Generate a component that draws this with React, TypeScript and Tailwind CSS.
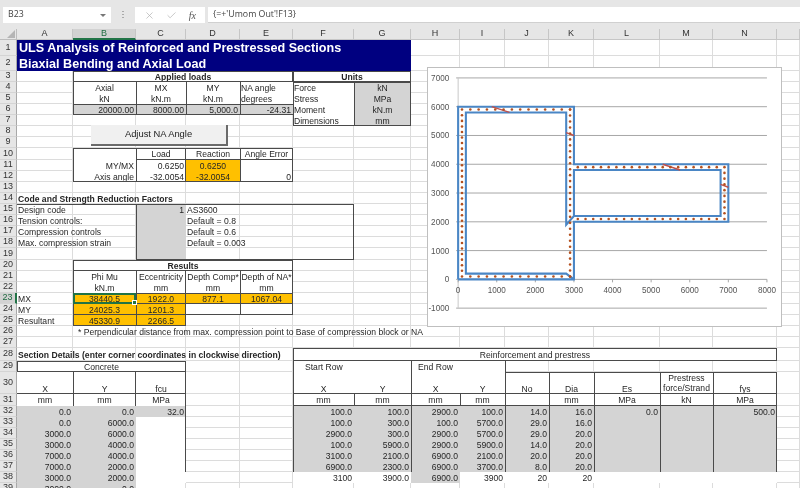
import { Check, X } from 'lucide-react'
import { twMerge } from 'tailwind-merge'

const COLS = ['A', 'B', 'C', 'D', 'E', 'F', 'G', 'H', 'I', 'J', 'K', 'L', 'M', 'N', 'O']
const ROW_COUNT = 39

type Item = { at: string; to?: string; text?: string; cls?: string }

const LEFT = 'justify-start pl-[1px]'
const RIGHT = 'justify-end pr-[2px]'
const MID = 'justify-center'
const BOLD = 'font-bold'
const GREY = 'bg-[#d4d4d4]'
const ORANGE = 'bg-[#ffc000]'

const area = (at: string, to = at) => {
  const col = (s: string) => s.charCodeAt(0) - 63
  const row = (s: string) => Number(s.slice(1)) + 1
  return {
    gridColumn: `${col(at)} / ${col(to) + 1}`,
    gridRow: `${row(at)} / ${row(to) + 1}`,
  }
}

// fills sit over the gridlines, under the text
const fills: Item[] = [
  { at: 'A1', to: 'G2', cls: 'bg-[#000080]' },
  { at: 'B3', to: 'E5', cls: 'bg-white' },
  { at: 'F3', to: 'F7', cls: 'bg-white' },
  { at: 'G3', cls: 'bg-white' },
  { at: 'B6', to: 'E6', cls: GREY },
  { at: 'G4', to: 'G7', cls: GREY },
  { at: 'B10', to: 'E12', cls: 'bg-white' },
  { at: 'D11', to: 'D12', cls: ORANGE },
  { at: 'C15', to: 'C19', cls: GREY },
  { at: 'B20', to: 'E22', cls: 'bg-white' },
  { at: 'B23', to: 'E23', cls: ORANGE },
  { at: 'B24', to: 'C25', cls: ORANGE },
  { at: 'D24', to: 'E24', cls: 'bg-white' },
  { at: 'F28', to: 'N28', cls: 'bg-white' },
  { at: 'A29', to: 'C31', cls: 'bg-white' },
  { at: 'F29', to: 'I31', cls: 'bg-white' },
  { at: 'J30', to: 'N31', cls: 'bg-white' },
  { at: 'A32', to: 'C32', cls: GREY },
  { at: 'A33', to: 'B39', cls: GREY },
  { at: 'C33', to: 'C38', cls: 'bg-white' },
  { at: 'F32', to: 'N37', cls: GREY },
  { at: 'F38', to: 'G38', cls: 'bg-white' },
  { at: 'H38', cls: GREY },
  { at: 'I38', to: 'N38', cls: 'bg-white' },
]

const column = (col: string, from: number, values: string[], cls = RIGHT): Item[] =>
  values.map((text, i) => ({ at: `${col}${from + i}`, text, cls }))

const texts: Item[] = [
  { at: 'A1', to: 'G1', text: 'ULS Analysis of Reinforced and Prestressed Sections', cls: 'justify-start pl-[2px] pt-[1px] text-[12.6px] font-bold text-white' },
  { at: 'A2', to: 'G2', text: 'Biaxial Bending and Axial Load', cls: 'justify-start pl-[2px] pt-[1px] text-[12.6px] font-bold text-white' },
  { at: 'B3', to: 'E3', text: 'Applied loads', cls: `${MID} ${BOLD}` },
  { at: 'F3', to: 'G3', text: 'Units', cls: `${MID} ${BOLD}` },
  { at: 'B4', text: 'Axial', cls: MID },
  { at: 'C4', text: 'MX', cls: MID },
  { at: 'D4', text: 'MY', cls: MID },
  { at: 'E4', text: 'NA angle', cls: LEFT },
  { at: 'B5', text: 'kN', cls: MID },
  { at: 'C5', text: 'kN.m', cls: MID },
  { at: 'D5', text: 'kN.m', cls: MID },
  { at: 'E5', text: 'degrees', cls: LEFT },
  { at: 'B6', text: '20000.00', cls: RIGHT },
  { at: 'C6', text: '8000.00', cls: RIGHT },
  { at: 'D6', text: '5,000.0', cls: RIGHT },
  { at: 'E6', text: '-24.31', cls: RIGHT },
  ...column('F', 4, ['Force', 'Stress', 'Moment', 'Dimensions'], LEFT),
  ...column('G', 4, ['kN', 'MPa', 'kN.m', 'mm'], MID),
  { at: 'C10', text: 'Load', cls: MID },
  { at: 'D10', text: 'Reaction', cls: MID },
  { at: 'E10', text: 'Angle Error', cls: MID },
  { at: 'B11', text: 'MY/MX', cls: RIGHT },
  { at: 'B12', text: 'Axis angle', cls: RIGHT },
  { at: 'C11', text: '0.6250', cls: RIGHT },
  { at: 'C12', text: '-32.0054', cls: RIGHT },
  { at: 'D11', text: '0.6250', cls: MID },
  { at: 'D12', text: '-32.0054', cls: MID },
  { at: 'E12', text: '0', cls: RIGHT },
  { at: 'A14', text: 'Code and Strength Reduction Factors', cls: `${LEFT} ${BOLD}` },
  ...column('A', 15, ['Design code', 'Tension controls:', 'Compression controls', 'Max. compression strain'], LEFT),
  { at: 'C15', text: '1', cls: RIGHT },
  ...column('D', 15, ['AS3600', 'Default = 0.8', 'Default = 0.6', 'Default = 0.003'], LEFT),
  { at: 'B20', to: 'E20', text: 'Results', cls: `${MID} ${BOLD}` },
  { at: 'B21', text: 'Phi Mu', cls: MID },
  { at: 'C21', text: 'Eccentricity', cls: MID },
  { at: 'D21', text: 'Depth Comp*', cls: MID },
  { at: 'E21', text: 'Depth of NA*', cls: MID },
  { at: 'B22', text: 'kN.m', cls: MID },
  { at: 'C22', text: 'mm', cls: MID },
  { at: 'D22', text: 'mm', cls: MID },
  { at: 'E22', text: 'mm', cls: MID },
  ...column('A', 23, ['MX', 'MY', 'Resultant'], LEFT),
  ...column('B', 23, ['38440.5', '24025.3', '45330.9'], MID),
  ...column('C', 23, ['1922.0', '1201.3', '2266.5'], MID),
  { at: 'D23', text: '877.1', cls: MID },
  { at: 'E23', text: '1067.04', cls: MID },
  { at: 'B26', text: '* Perpendicular distance from max. compression point to Base of compression block or NA', cls: 'justify-start pl-[5px]' },
  { at: 'A28', text: 'Section Details (enter corner coordinates in clockwise direction)', cls: `${LEFT} ${BOLD}` },
  { at: 'F28', to: 'N28', text: 'Reinforcement and prestress', cls: MID },
  { at: 'A29', to: 'C29', text: 'Concrete', cls: MID },
  { at: 'F29', text: 'Start Row', cls: 'justify-start pl-[12px]' },
  { at: 'H29', text: 'End Row', cls: 'justify-start pl-[7px]' },
  ...[
    ['A', 'X'], ['B', 'Y'], ['C', 'fcu'], ['F', 'X'], ['G', 'Y'], ['H', 'X'], ['I', 'Y'],
    ['J', 'No'], ['K', 'Dia'], ['L', 'Es'], ['N', 'fys'],
  ].map(([c, text]) => ({ at: `${c}30`, text, cls: `${MID} items-end` })),
  { at: 'M30', text: 'Prestress\nforce/Strand', cls: `${MID} whitespace-pre-line text-center` },
  ...[
    ['A', 'mm'], ['B', 'mm'], ['C', 'MPa'], ['F', 'mm'], ['G', 'mm'], ['H', 'mm'], ['I', 'mm'],
    ['K', 'mm'], ['L', 'MPa'], ['M', 'kN'], ['N', 'MPa'],
  ].map(([c, text]) => ({ at: `${c}31`, text, cls: MID })),
  ...column('A', 32, ['0.0', '0.0', '3000.0', '3000.0', '7000.0', '7000.0', '3000.0', '3000.0']),
  ...column('B', 32, ['0.0', '6000.0', '6000.0', '4000.0', '4000.0', '2000.0', '2000.0', '0.0']),
  { at: 'C32', text: '32.0', cls: RIGHT },
  ...column('F', 32, ['100.0', '100.0', '2900.0', '100.0', '3100.0', '6900.0', '3100']),
  ...column('G', 32, ['100.0', '300.0', '300.0', '5900.0', '2100.0', '2300.0', '3900.0']),
  ...column('H', 32, ['2900.0', '100.0', '2900.0', '2900.0', '6900.0', '6900.0', '6900.0']),
  ...column('I', 32, ['100.0', '5700.0', '5700.0', '5900.0', '2100.0', '3700.0', '3900']),
  ...column('J', 32, ['14.0', '29.0', '29.0', '14.0', '20.0', '8.0', '20']),
  ...column('K', 32, ['16.0', '16.0', '20.0', '20.0', '20.0', '20.0', '20']),
  { at: 'L32', text: '0.0', cls: RIGHT },
  { at: 'N32', text: '500.0', cls: RIGHT },
]

const LINE_T = 'border-t border-t-[#4a4a4a]'
const LINE_B = 'border-b border-b-[#4a4a4a]'
const LINE_L = 'border-l border-l-[#4a4a4a]'
const LINE_R = 'border-r border-r-[#4a4a4a]'
const BOX = 'border border-[#4a4a4a]'

// cell borders drawn on top of everything
const borders: Item[] = [
  { at: 'B3', to: 'E3', cls: BOX },
  { at: 'F3', to: 'G3', cls: BOX },
  { at: 'B4', to: 'B6', cls: LINE_L },
  { at: 'C4', to: 'C6', cls: LINE_L },
  { at: 'D4', to: 'D6', cls: LINE_L },
  { at: 'E4', to: 'E6', cls: LINE_L },
  { at: 'B6', to: 'E6', cls: `${LINE_T} ${LINE_B}` },
  { at: 'F4', to: 'G7', cls: BOX },
  { at: 'G4', to: 'G7', cls: LINE_L },
  { at: 'B10', to: 'E12', cls: BOX },
  { at: 'C10', to: 'E10', cls: LINE_B },
  { at: 'C10', to: 'C12', cls: `${LINE_L} ${LINE_R}` },
  { at: 'E10', to: 'E12', cls: LINE_L },
  { at: 'C15', to: 'F19', cls: BOX },
  { at: 'A15', to: 'B15', cls: LINE_T },
  { at: 'B20', to: 'E20', cls: BOX },
  { at: 'B21', to: 'E22', cls: `${LINE_L} ${LINE_R}` },
  { at: 'C21', to: 'C25', cls: `${LINE_L} ${LINE_R}` },
  { at: 'E21', to: 'E24', cls: `${LINE_L} ${LINE_R}` },
  { at: 'B23', to: 'E23', cls: `${LINE_T} ${LINE_B}` },
  { at: 'B24', to: 'C25', cls: `${LINE_L} ${LINE_R} ${LINE_B}` },
  { at: 'B24', to: 'C24', cls: LINE_B },
  { at: 'D24', to: 'E24', cls: LINE_B },
  { at: 'F28', to: 'N28', cls: BOX },
  { at: 'A29', to: 'C29', cls: BOX },
  { at: 'A30', to: 'C30', cls: LINE_B },
  { at: 'B30', to: 'B31', cls: `${LINE_L} ${LINE_R}` },
  { at: 'C29', to: 'C37', cls: LINE_R },
  { at: 'F29', to: 'F37', cls: LINE_L },
  { at: 'H29', to: 'H37', cls: LINE_L },
  { at: 'G31', cls: LINE_L },
  { at: 'I31', cls: LINE_L },
  { at: 'J29', to: 'J37', cls: LINE_L },
  { at: 'F30', to: 'N30', cls: LINE_B },
  { at: 'J30', to: 'N30', cls: LINE_T },
  { at: 'F31', to: 'N31', cls: LINE_B },
  { at: 'K30', to: 'K37', cls: LINE_L },
  { at: 'L30', to: 'L37', cls: LINE_L },
  { at: 'M30', to: 'M37', cls: LINE_L },
  { at: 'N30', to: 'N37', cls: `${LINE_L} ${LINE_R}` },
]

const FormulaBar = () => (
  <div className="flex h-[29px] shrink-0 items-start gap-[3px] bg-[#e6e6e6] pl-[3px] pt-[7px] font-['Open_Sans',sans-serif] text-[8.8px] text-[#444]">
    <div className="flex h-[16px] w-[108px] items-center justify-between bg-white pl-[5px] pr-[5px]">
      <span>B23</span>
      <span className="border-x-[3px] border-t-[3px] border-x-transparent border-t-[#777]" />
    </div>
    <div className="mx-[7px] mt-[4px] flex flex-col gap-[2px] px-[1px]">
      <span className="h-[1px] w-[2px] bg-[#aaa]" />
      <span className="h-[1px] w-[2px] bg-[#aaa]" />
      <span className="h-[1px] w-[2px] bg-[#aaa]" />
    </div>
    <div className="flex h-[16px] w-[70px] items-center justify-between bg-white px-[9px]">
      <X size={11} strokeWidth={1.5} className="text-[#b0b0b0]" />
      <Check size={11} strokeWidth={1.5} className="text-[#b0b0b0]" />
      <span className="font-['Liberation_Serif',serif] text-[10px] italic text-[#555]">fx</span>
    </div>
    <div className="flex h-[16px] flex-1 items-center border-b border-b-[#d0d0d0] bg-white pl-[5px]">{"{=+'Umom Out'!F13}"}</div>
  </div>
)

const Sheet = () => (
  <div className="relative grid grid-cols-[17px_56px_63px_50px_54px_53px_61px_57px_49px_45px_44px_45px_66px_53px_64px_23px] grid-rows-[11px_16px_15px_11px_11px_11px_11px_11px_11px_11px_12px_11px_11px_11px_11px_11px_11px_11px_11px_12px_11px_11px_11px_11px_11px_11px_11px_11px_13px_11px_22px_12px_11px_11px_11px_11px_11px_11px_11px_11px] bg-white font-['Liberation_Sans',Arial,sans-serif] text-[8.6px] text-[#262626]">
    <div className="relative border-b border-r border-[#bdbdbd] bg-[#e6e6e6]" style={{ gridColumn: 1, gridRow: 1 }}>
      <span className="absolute bottom-[1px] right-[1px] border-b-[8px] border-l-[8px] border-b-[#b5b5b5] border-l-transparent" />
    </div>
    {COLS.map((c, ci) => (
      <div
        key={c}
        style={{ gridColumn: ci + 2, gridRow: 1 }}
        className={twMerge(
          'flex items-center justify-center border-b border-r border-[#c6c6c6] bg-[#e6e6e6] text-[9px] text-[#333]',
          c === 'B' && 'border-b-2 border-b-[#217346] bg-[#d2d2d2] text-[#1f6b41]',
        )}
      >
        {c === 'O' ? '' : c}
      </div>
    ))}
    {Array.from({ length: ROW_COUNT }, (_, i) => i + 1).map((r) => (
      <div key={r} className="contents">
        <div
          style={{ gridColumn: 1, gridRow: r + 1 }}
          className={twMerge(
            'flex items-center justify-center border-b border-r border-b-[#d4d4d4] border-r-[#a8a8a8] bg-[#e6e6e6] text-[9px] text-[#333]',
            r === 23 && 'border-r-2 border-r-[#217346] bg-[#d2d2d2] text-[#1f6b41]',
          )}
        >
          {r}
        </div>
        {COLS.map((c, ci) => (
          <div key={c} style={{ gridColumn: ci + 2, gridRow: r + 1 }} className="border-b border-r border-[#dcdcdc]" />
        ))}
      </div>
    ))}
    {fills.map((f) => (
      <div key={`fill-${f.at}`} className={f.cls} style={area(f.at, f.to)} />
    ))}
    {texts.map((t) => (
      <div
        key={`text-${t.at}`}
        className={twMerge('flex min-w-0 items-center whitespace-nowrap leading-[10px]', t.cls)}
        style={area(t.at, t.to)}
      >
        <span>{t.text}</span>
      </div>
    ))}
    {borders.map((b, i) => (
      <div key={i} className={twMerge('pointer-events-none', b.cls)} style={area(b.at, b.to)} />
    ))}
    <div className="pointer-events-none relative border-2 border-[#217346]" style={area('B23')}>
      <span className="absolute -bottom-[3px] -right-[3px] h-[5px] w-[5px] border border-white bg-[#217346]" />
    </div>
    <button className="absolute left-[91px] top-[96px] flex h-[21px] w-[137px] items-center justify-center border-b-2 border-r-2 border-b-[#6b6b6b] border-r-[#6b6b6b] bg-[#f0f0f0] text-[9.4px] text-[#222]">
      Adjust NA Angle
    </button>
    <SectionChart />
  </div>
)

const px = (v: number) => 30 + v * 0.0389
const py = (v: number) => 10 + (7000 - v) * 0.029

const poly = (pts: number[][]) => pts.map(([x, y]) => `${px(x).toFixed(1)},${py(y).toFixed(1)}`).join(' ')

const BAR_RUNS = [
  [100, 100, 2900, 100, 14],
  [100, 300, 100, 5700, 29],
  [100, 5900, 2900, 5900, 14],
  [2900, 100, 2900, 5900, 29],
  [3100, 2100, 6900, 2100, 20],
  [6900, 2300, 6900, 3700, 8],
  [3100, 3900, 6900, 3900, 20],
]

const bars = BAR_RUNS.flatMap(([x1, y1, x2, y2, n]) =>
  Array.from({ length: n }, (_, i) => {
    const t = n > 1 ? i / (n - 1) : 0
    return [x1 + (x2 - x1) * t, y1 + (y2 - y1) * t]
  }),
)

const NA_LINES = [
  [870, 6000, 1330, 5800],
  [2800, 5100, 3000, 5000],
  [5300, 4000, 5750, 3800],
  [6800, 3300, 7000, 3200],
]

const SectionChart = () => (
  <div className="absolute left-[427px] top-[38px] h-[260px] w-[355px] border border-[#bfbfbf] bg-white">
    <svg viewBox="0 0 355 260" className="h-full w-full" fontFamily="Liberation Sans, Arial, sans-serif" fontSize="8.2" fill="#555">
      {[7000, 6000, 5000, 4000, 3000, 2000, 1000, 0, -1000].map((v) => (
        <g key={v}>
          <line x1={px(0) - 2} x2={px(8000)} y1={py(v)} y2={py(v)} stroke="#a6a6a6" strokeWidth="1" />
          <text x="21" y={py(v) + 3} textAnchor="end">{v}</text>
        </g>
      ))}
      <line x1={px(0)} x2={px(0)} y1={py(7000)} y2={py(-1000)} stroke="#c8c8c8" strokeWidth="1" />
      {[0, 1000, 2000, 3000, 4000, 5000, 6000, 7000, 8000].map((v) => (
        <g key={v}>
          <line x1={px(v)} x2={px(v)} y1={py(0)} y2={py(0) + 3} stroke="#a6a6a6" strokeWidth="1" />
          <text x={px(v)} y={py(0) + 14} textAnchor="middle">{v}</text>
        </g>
      ))}
      <polyline
        points={poly([[0, 0], [0, 6000], [3000, 6000], [3000, 4000], [7000, 4000], [7000, 2000], [3000, 2000], [3000, 0], [0, 0]])}
        fill="none"
        stroke="#4a86c5"
        strokeWidth="2.1"
      />
      <polyline
        points={poly([[3000, 0], [2800, 200], [200, 200], [200, 5800], [2800, 5800], [2800, 1900], [3000, 2200], [6800, 2200], [6800, 3800], [3000, 3800], [3000, 2200]])}
        fill="none"
        stroke="#4a86c5"
        strokeWidth="2.1"
      />
      {NA_LINES.map(([x1, y1, x2, y2]) => (
        <line key={x1} x1={px(x1)} y1={py(y1)} x2={px(x2)} y2={py(y2)} stroke="#c0504d" strokeWidth="1.4" />
      ))}
      {bars.map(([x, y], i) => (
        <circle key={i} cx={px(x)} cy={py(y)} r="1.3" fill="#b4501e" />
      ))}
    </svg>
  </div>
)

export default function App() {
  return (
    <div className="flex h-[488px] w-[800px] flex-col overflow-hidden bg-white blur-[0.3px]">
      <FormulaBar />
      <Sheet />
    </div>
  )
}
